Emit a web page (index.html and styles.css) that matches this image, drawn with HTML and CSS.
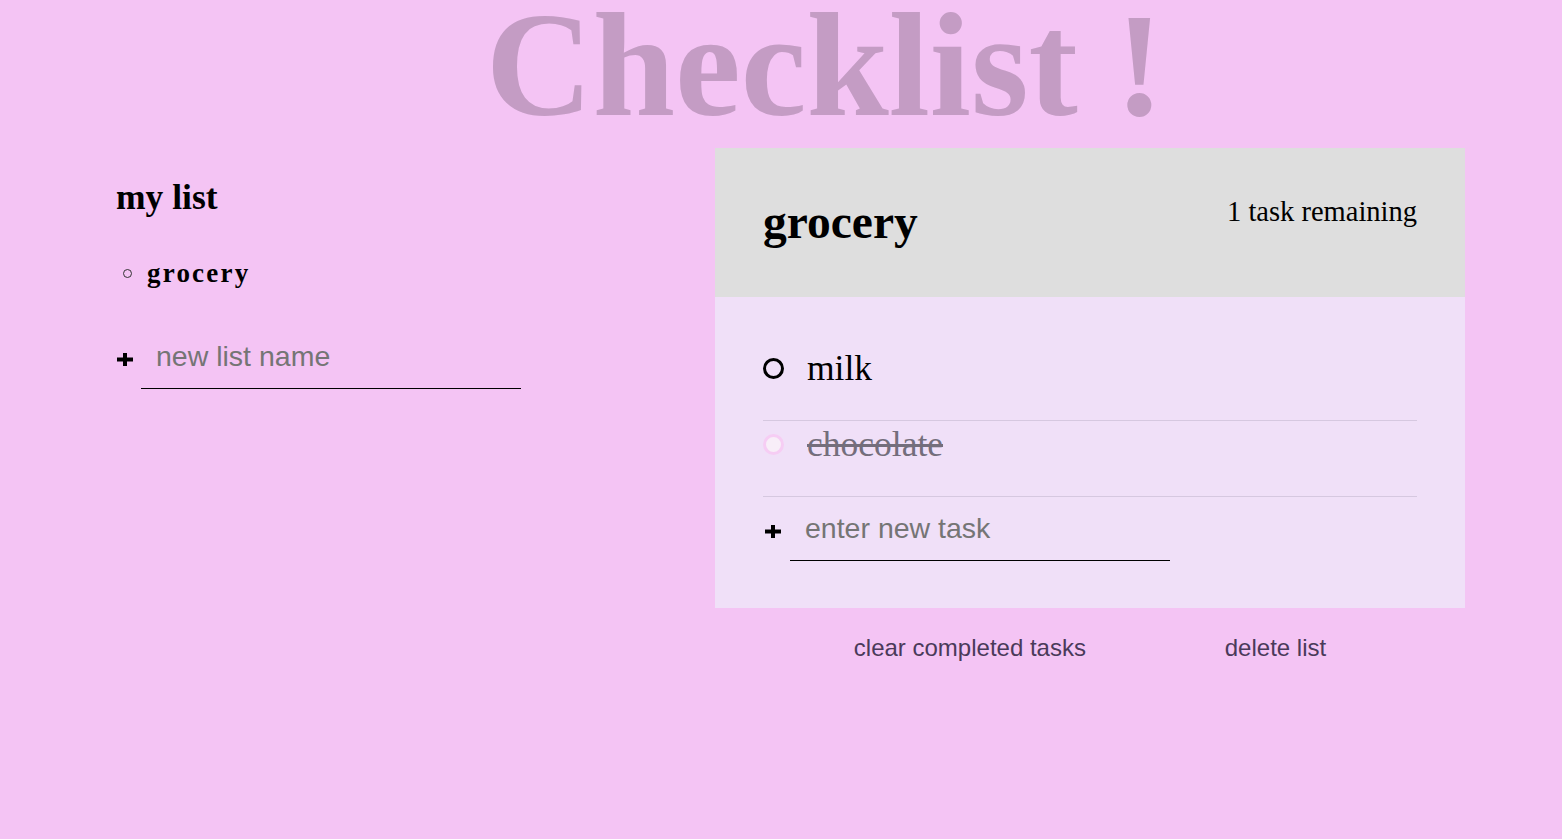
FILE: index.html
```html
<!DOCTYPE html>
<html lang="en">
<head>
<meta charset="utf-8">
<title>Checklist</title>
<link rel="stylesheet" href="styles.css">
</head>
<body>
<h1 class="title">Checklist !</h1>
<main class="layout">
  <section class="lists">
    <h2 class="lists-title">my list</h2>
    <ul class="list-names">
      <li class="list-name"><span class="bullet"></span>grocery</li>
    </ul>
    <form class="new-form">
      <svg class="plus" width="16" height="13" viewBox="0 0 16 13"><rect x="0" y="4.5" width="16" height="4"/><rect x="6" y="0" width="4" height="13"/></svg>
      <input class="new-input" type="text" placeholder="new list name">
    </form>
  </section>
  <section class="panel-wrap">
    <div class="panel">
      <div class="panel-header">
        <h2 class="panel-title">grocery</h2>
        <p class="task-count">1 task remaining</p>
      </div>
      <div class="panel-body">
        <div class="task">
          <span class="check"></span>
          <span class="task-label">milk</span>
        </div>
        <div class="task done">
          <span class="check"></span>
          <span class="task-label">chocolate</span>
        </div>
        <form class="new-form task-form">
          <svg class="plus" width="16" height="13" viewBox="0 0 16 13"><rect x="0" y="4.5" width="16" height="4"/><rect x="6" y="0" width="4" height="13"/></svg>
          <input class="new-input" type="text" placeholder="enter new task">
        </form>
      </div>
    </div>
    <div class="actions">
      <button class="action" type="button">clear completed tasks</button>
      <button class="action" type="button">delete list</button>
    </div>
  </section>
</main>
</body>
</html>
```
FILE: styles.css
```css
* { box-sizing: border-box; }

body {
  margin: 0;
  background: #f4c4f4;
  font-family: "Liberation Serif", "Times New Roman", serif;
  color: #000;
}

.title {
  margin: 0;
  padding: 5px 0 0 88px;
  height: 125px;
  font-size: 148px;
  line-height: 120px;
  font-weight: 700;
  color: #c49cc4;
  text-align: center;
}

.layout {
  display: grid;
  grid-template-columns: 599px 750px;
  padding: 23px 0 0 116px;
}

.lists-title {
  margin: 29px 0 0;
  font-size: 35.5px;
  line-height: 40px;
  font-weight: 700;
}

.list-names {
  list-style: none;
  margin: 38px 0 0;
  padding: 0;
}

.list-name {
  display: flex;
  align-items: center;
  font-size: 27px;
  line-height: 36px;
  font-weight: 700;
  letter-spacing: 2.2px;
}

.bullet {
  width: 9px;
  height: 9px;
  border: 1px solid #333;
  border-radius: 50%;
  margin: 0 15px 0 7px;
}

.new-form {
  display: flex;
  align-items: center;
  gap: 8px;
  margin-top: 39px;
}

.plus {
  display: block;
  flex: none;
  fill: #000;
  margin-left: 1px;
}

.new-input {
  width: 380px;
  margin: 0;
  padding: 10px 15px 15px;
  border: 0;
  border-bottom: 1px solid #000;
  background: transparent;
  font-family: "Liberation Sans", Arial, sans-serif;
  font-size: 28.5px;
  color: #000;
  outline: none;
}

.new-input::placeholder { color: #757575; }

.panel { width: 750px; }

.panel-header {
  display: flex;
  justify-content: space-between;
  align-items: flex-start;
  height: 149px;
  padding: 46px 48px 0;
  background: #dedede;
}

.panel-title {
  margin: 0;
  font-size: 47.5px;
  line-height: 56px;
  font-weight: 700;
}

.task-count {
  margin: 2px 0 0;
  font-size: 28.5px;
  line-height: 32px;
}

.panel-body {
  padding: 48px 48px 47px;
  background: #f0e0f8;
}

.task {
  display: flex;
  align-items: center;
  gap: 23px;
  padding: 3px 0 32px;
  border-bottom: 1px solid #d6c8e0;
  font-size: 35.5px;
  line-height: 40px;
}

.check {
  flex: none;
  width: 21px;
  height: 21px;
  border: 3px solid #000;
  border-radius: 50%;
}

.task.done .check {
  border-color: #f6cdf4;
  background: #f8eef8;
}

.task.done .task-label {
  color: #746e7c;
  text-decoration: line-through;
  text-decoration-thickness: 3px;
  text-decoration-color: #746e7c;
}

.task-form {
  margin-top: 5px;
  gap: 9px;
}

.task-form .plus { margin-left: 2px; }

.actions {
  display: flex;
  justify-content: space-evenly;
  margin-top: 26px;
}

.action {
  margin: 0;
  padding: 0;
  border: 0;
  background: transparent;
  font-family: "Liberation Sans", Arial, sans-serif;
  font-size: 24px;
  color: #4a3a5a;
  cursor: pointer;
}
```
